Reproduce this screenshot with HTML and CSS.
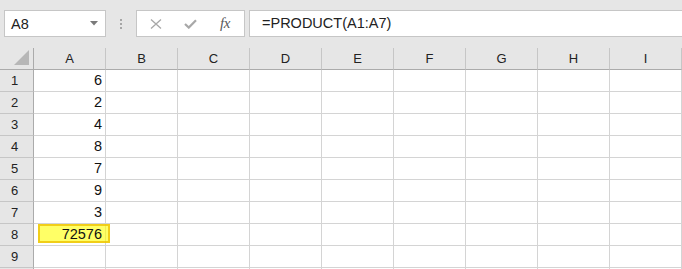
FILE: index.html
```html
<!DOCTYPE html>
<html>
<head>
<meta charset="utf-8">
<link rel="stylesheet" href="styles.css">
</head>
<body>
<div class="toolbar">
  <div class="namebox">
    <span class="name">A8</span>
    <svg class="caret" width="8" height="5" viewBox="0 0 8 5"><path d="M0 0H8L4 4.5Z" fill="#7a7a7a"/></svg>
  </div>
  <div class="grip"><i></i><i></i><i></i></div>
  <div class="fxbox">
    <svg class="ic-x" width="12" height="10" viewBox="0 0 12 10"><path d="M1 0.5L11 9.5M11 0.5L1 9.5" stroke="#a8a8a8" stroke-width="1.3" fill="none"/></svg>
    <svg class="ic-ok" width="13" height="10" viewBox="0 0 13 10"><path d="M1 5L4.8 8.6L12 1.2" stroke="#a8a8a8" stroke-width="2.2" fill="none"/></svg>
    <span class="fx">fx</span>
  </div>
  <div class="formula">=PRODUCT(A1:A7)</div>
</div>
<div class="sheet">
  <div class="corner"><svg width="15" height="15" viewBox="0 0 15 15"><path d="M15 0V15H0Z" fill="#b7b7b7"/></svg></div>
  <div class="ch">A</div><div class="ch">B</div><div class="ch">C</div><div class="ch">D</div><div class="ch">E</div><div class="ch">F</div><div class="ch">G</div><div class="ch">H</div><div class="ch">I</div>

  <div class="rh">1</div><div class="c num">6</div><div class="c"></div><div class="c"></div><div class="c"></div><div class="c"></div><div class="c"></div><div class="c"></div><div class="c"></div><div class="c"></div>
  <div class="rh">2</div><div class="c num">2</div><div class="c"></div><div class="c"></div><div class="c"></div><div class="c"></div><div class="c"></div><div class="c"></div><div class="c"></div><div class="c"></div>
  <div class="rh">3</div><div class="c num">4</div><div class="c"></div><div class="c"></div><div class="c"></div><div class="c"></div><div class="c"></div><div class="c"></div><div class="c"></div><div class="c"></div>
  <div class="rh">4</div><div class="c num">8</div><div class="c"></div><div class="c"></div><div class="c"></div><div class="c"></div><div class="c"></div><div class="c"></div><div class="c"></div><div class="c"></div>
  <div class="rh">5</div><div class="c num">7</div><div class="c"></div><div class="c"></div><div class="c"></div><div class="c"></div><div class="c"></div><div class="c"></div><div class="c"></div><div class="c"></div>
  <div class="rh">6</div><div class="c num">9</div><div class="c"></div><div class="c"></div><div class="c"></div><div class="c"></div><div class="c"></div><div class="c"></div><div class="c"></div><div class="c"></div>
  <div class="rh">7</div><div class="c num">3</div><div class="c"></div><div class="c"></div><div class="c"></div><div class="c"></div><div class="c"></div><div class="c"></div><div class="c"></div><div class="c"></div>
  <div class="rh">8</div><div class="c num sel"><span class="hl"></span><span class="val">72576</span></div><div class="c"></div><div class="c"></div><div class="c"></div><div class="c"></div><div class="c"></div><div class="c"></div><div class="c"></div><div class="c"></div>
  <div class="rh">9</div><div class="c"></div><div class="c"></div><div class="c"></div><div class="c"></div><div class="c"></div><div class="c"></div><div class="c"></div><div class="c"></div><div class="c"></div>
  <div class="rh"></div><div class="c"></div><div class="c"></div><div class="c"></div><div class="c"></div><div class="c"></div><div class="c"></div><div class="c"></div><div class="c"></div><div class="c"></div>
</div>
</body>
</html>
```
FILE: styles.css
```css
html, body {
  margin: 0;
  padding: 0;
  width: 682px;
  height: 269px;
  overflow: hidden;
  background: #e6e6e6;
  font-family: "Liberation Sans", Arial, sans-serif;
  color: #222;
}

.toolbar {
  display: flex;
  align-items: flex-start;
  height: 48px;
  padding-top: 10px;
  box-sizing: border-box;
}

.namebox {
  box-sizing: border-box;
  margin-left: 4px;
  width: 102px;
  height: 27px;
  background: #fff;
  border: 1px solid #c6c6c6;
  display: flex;
  align-items: center;
  padding-left: 6px;
  padding-right: 7px;
}
.name {
  font-size: 14.5px;
  flex: 1;
  line-height: 1;
  padding-top: 1px;
}
.caret {
  display: block;
}

.grip {
  width: 30px;
  height: 27px;
  display: flex;
  flex-direction: column;
  align-items: center;
  justify-content: center;
  gap: 2px;
}
.grip i {
  display: block;
  width: 2px;
  height: 2px;
  background: #a6a6a6;
}

.fxbox {
  box-sizing: border-box;
  width: 109px;
  height: 27px;
  background: #fff;
  border: 1px solid #c6c6c6;
  display: flex;
  align-items: center;
}
.ic-x { margin-left: 13px; display: block; }
.ic-ok { margin-left: 22px; display: block; }
.fx {
  margin-left: 23px;
  font-family: "Liberation Serif", "Times New Roman", serif;
  font-style: italic;
  font-size: 15px;
  color: #5a5a5a;
  letter-spacing: -0.5px;
}

.formula {
  box-sizing: border-box;
  margin-left: 4px;
  flex: 1;
  margin-right: -3px;
  height: 27px;
  background: #fff;
  border: 1px solid #c6c6c6;
  font-size: 14.5px;
  line-height: 25px;
  padding-left: 12px;
}

.sheet {
  display: grid;
  grid-template-columns: 34px repeat(9, 72px);
  grid-auto-rows: 22px;
}
.sheet > div {
  box-sizing: border-box;
}

.corner {
  background: #e6e6e6;
  border-right: 1px solid #ababab;
  border-bottom: 1px solid #ababab;
  display: flex;
  align-items: flex-end;
  justify-content: flex-end;
  padding: 0 4px 4px 0;
}
.corner svg { display: block; }

.ch {
  background: #e6e6e6;
  border-right: 1px solid #c6c6c6;
  border-bottom: 1px solid #ababab;
  font-size: 13px;
  text-align: center;
  line-height: 21px;
}

.rh {
  background: #e6e6e6;
  border-right: 1px solid #ababab;
  border-bottom: 1px solid #c6c6c6;
  font-size: 13px;
  text-align: center;
  padding-right: 4px;
  line-height: 21px;
}

.c {
  background: #fff;
  border-right: 1px solid #d4d4d4;
  border-bottom: 1px solid #d4d4d4;
}
.num {
  font-size: 14.5px;
  text-align: right;
  padding-right: 3px;
  line-height: 21px;
  color: #111;
}

.sel {
  position: relative;
}
.hl {
  position: absolute;
  left: 4px;
  top: 0;
  width: 72px;
  height: 19px;
  box-sizing: border-box;
  background: rgba(255, 255, 0, 0.6);
  border: 2px solid rgba(236, 190, 0, 0.75);
  z-index: 1;
}
.val {
  position: relative;
  z-index: 2;
}
```
